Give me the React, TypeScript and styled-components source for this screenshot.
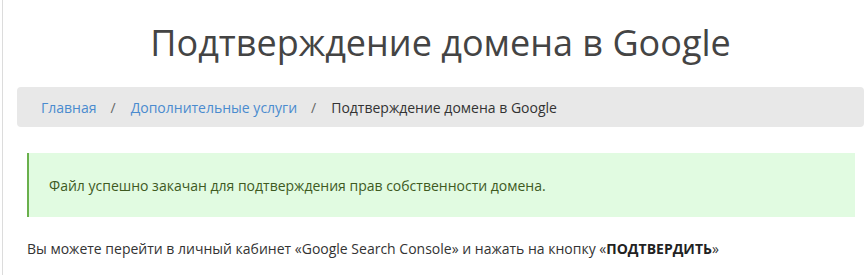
import { styled, createGlobalStyle } from "styled-components";

const GlobalStyle = createGlobalStyle`
  html, body {
    margin: 0;
    padding: 0;
    background: #fff;
  }
  body {
    font-family: "Open Sans", "Noto Sans", sans-serif;
    font-size: 14px;
    color: #333;
  }
`;

const Page = styled.div`
  margin-left: 2px;
  border-left: 1px solid #dcdcdc;
  padding: 0 3px 0 14px;
  min-height: 275px;
  box-sizing: border-box;
`;

const Title = styled.h1`
  margin: 0;
  padding: 18px 0 0;
  height: 69px;
  text-align: center;
  font-size: 36px;
  font-weight: 400;
  line-height: 50px;
  color: #444;
`;

const Breadcrumbs = styled.ol`
  list-style: none;
  margin: 0;
  padding: 0 24px;
  height: 40px;
  display: flex;
  align-items: center;
  background: #e8e8e8;
  border-radius: 4px;
  font-size: 14px;
`;

const Crumb = styled.li<{ $current?: boolean }>`
  color: ${({ $current }) => ($current ? "#333" : "#4a8bcf")};

  &:not(:first-child)::before {
    content: "/";
    color: #666;
    padding: 0 15px 0 14px;
  }
`;

const Content = styled.div`
  padding: 26px 9px 0 10px;
`;

const Alert = styled.div`
  height: 64px;
  box-sizing: border-box;
  display: flex;
  align-items: center;
  padding: 0 20px;
  background: #e1fbe1;
  border-left: 2px solid #6ab04c;
  color: #3e5a1f;
  font-size: 14px;
`;

const Text = styled.p`
  margin: 22px 0 0;
  font-size: 14px;
  line-height: 20px;
  color: #333;

  b {
    font-weight: 700;
    color: #222;
  }
`;

export default function App() {
  return (
    <>
      <GlobalStyle />
      <Page>
        <Title>Подтверждение домена в Google</Title>
        <Breadcrumbs>
          <Crumb>Главная</Crumb>
          <Crumb>Дополнительные услуги</Crumb>
          <Crumb $current>Подтверждение домена в Google</Crumb>
        </Breadcrumbs>
        <Content>
          <Alert>Файл успешно закачан для подтверждения прав собственности домена.</Alert>
          <Text>
            Вы можете перейти в личный кабинет «Google Search Console» и нажать на кнопку «<b>ПОДТВЕРДИТЬ</b>»
          </Text>
        </Content>
      </Page>
    </>
  );
}
